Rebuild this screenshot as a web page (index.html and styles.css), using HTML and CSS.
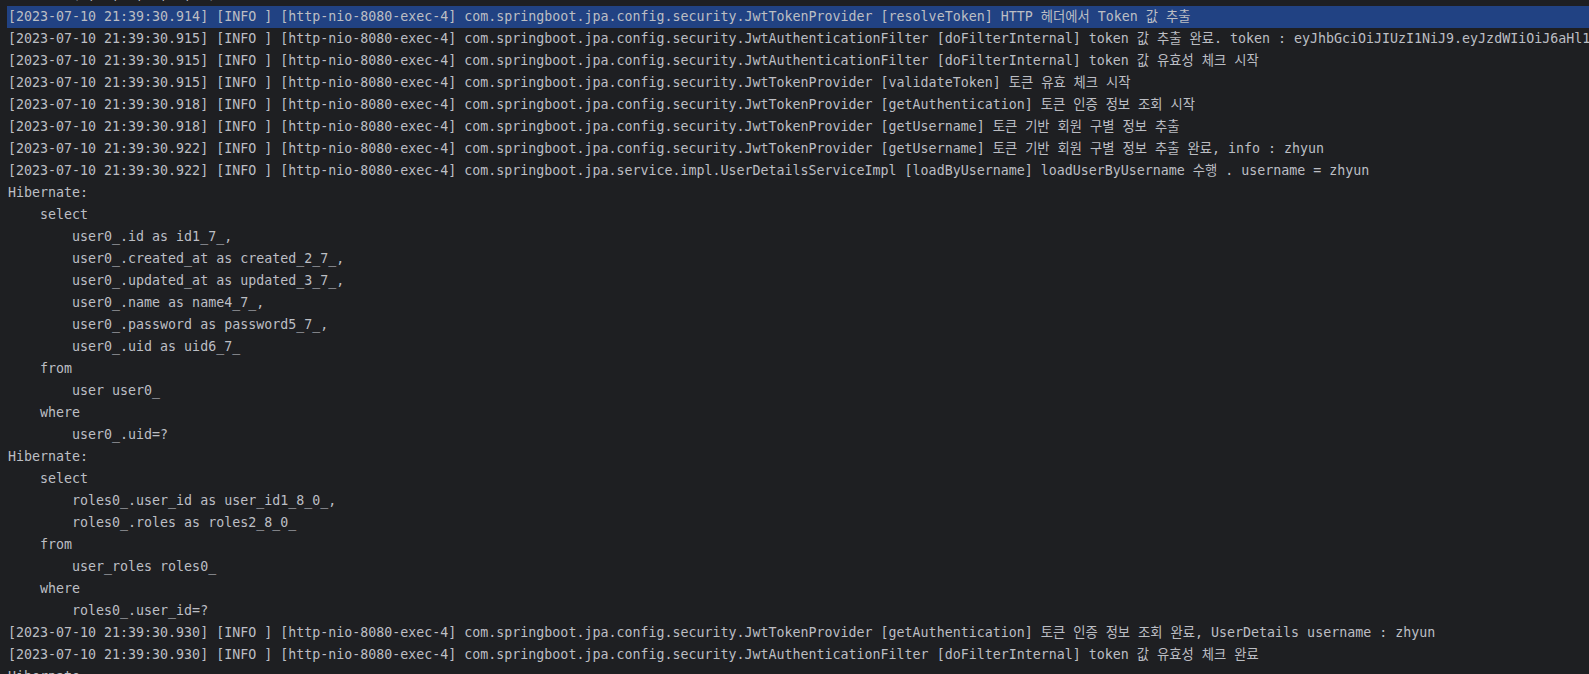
FILE: index.html
```html
<!DOCTYPE html>
<html lang="ko">
<head>
<meta charset="utf-8">
<title>Console</title>
<link rel="stylesheet" href="styles.css">
</head>
<body>
<div class="console">
<div class="line">        (?, ?, ?, ?, ?, ?)</div>
<div class="line selected">[2023-07-10 21:39:30.914] [INFO ] [http-nio-8080-exec-4] com.springboot.jpa.config.security.JwtTokenProvider [resolveToken] HTTP 헤더에서 Token 값 추출</div>
<div class="line">[2023-07-10 21:39:30.915] [INFO ] [http-nio-8080-exec-4] com.springboot.jpa.config.security.JwtAuthenticationFilter [doFilterInternal] token 값 추출 완료. token : eyJhbGciOiJIUzI1NiJ9.eyJzdWIiOiJ6aHl1biIsInJvbGVzIjpbXX0</div>
<div class="line">[2023-07-10 21:39:30.915] [INFO ] [http-nio-8080-exec-4] com.springboot.jpa.config.security.JwtAuthenticationFilter [doFilterInternal] token 값 유효성 체크 시작</div>
<div class="line">[2023-07-10 21:39:30.915] [INFO ] [http-nio-8080-exec-4] com.springboot.jpa.config.security.JwtTokenProvider [validateToken] 토큰 유효 체크 시작</div>
<div class="line">[2023-07-10 21:39:30.918] [INFO ] [http-nio-8080-exec-4] com.springboot.jpa.config.security.JwtTokenProvider [getAuthentication] 토큰 인증 정보 조회 시작</div>
<div class="line">[2023-07-10 21:39:30.918] [INFO ] [http-nio-8080-exec-4] com.springboot.jpa.config.security.JwtTokenProvider [getUsername] 토큰 기반 회원 구별 정보 추출</div>
<div class="line">[2023-07-10 21:39:30.922] [INFO ] [http-nio-8080-exec-4] com.springboot.jpa.config.security.JwtTokenProvider [getUsername] 토큰 기반 회원 구별 정보 추출 완료, info : zhyun</div>
<div class="line">[2023-07-10 21:39:30.922] [INFO ] [http-nio-8080-exec-4] com.springboot.jpa.service.impl.UserDetailsServiceImpl [loadByUsername] loadUserByUsername 수행 . username = zhyun</div>
<div class="line">Hibernate: </div>
<div class="line">    select</div>
<div class="line">        user0_.id as id1_7_,</div>
<div class="line">        user0_.created_at as created_2_7_,</div>
<div class="line">        user0_.updated_at as updated_3_7_,</div>
<div class="line">        user0_.name as name4_7_,</div>
<div class="line">        user0_.password as password5_7_,</div>
<div class="line">        user0_.uid as uid6_7_ </div>
<div class="line">    from</div>
<div class="line">        user user0_ </div>
<div class="line">    where</div>
<div class="line">        user0_.uid=?</div>
<div class="line">Hibernate: </div>
<div class="line">    select</div>
<div class="line">        roles0_.user_id as user_id1_8_0_,</div>
<div class="line">        roles0_.roles as roles2_8_0_ </div>
<div class="line">    from</div>
<div class="line">        user_roles roles0_ </div>
<div class="line">    where</div>
<div class="line">        roles0_.user_id=?</div>
<div class="line">[2023-07-10 21:39:30.930] [INFO ] [http-nio-8080-exec-4] com.springboot.jpa.config.security.JwtTokenProvider [getAuthentication] 토큰 인증 정보 조회 완료, UserDetails username : zhyun</div>
<div class="line">[2023-07-10 21:39:30.930] [INFO ] [http-nio-8080-exec-4] com.springboot.jpa.config.security.JwtAuthenticationFilter [doFilterInternal] token 값 유효성 체크 완료</div>
<div class="line">Hibernate: </div>
</div>
</body>
</html>
```

FILE: styles.css
```css
html, body {
  margin: 0;
  padding: 0;
  background: #1e1f22;
  overflow: hidden;
  height: 674px;
}

.console {
  margin-top: -16px;
  padding-left: 7px;
  font-family: "DejaVu Sans Mono", "Noto Sans CJK KR", monospace;
  font-size: 13.3px;
  color: #bcbec4;
}

.line {
  height: 22px;
  line-height: 22px;
  white-space: pre;
  padding-left: 1px;
  overflow: hidden;
}

.selected {
  background: #214283;
}
```
